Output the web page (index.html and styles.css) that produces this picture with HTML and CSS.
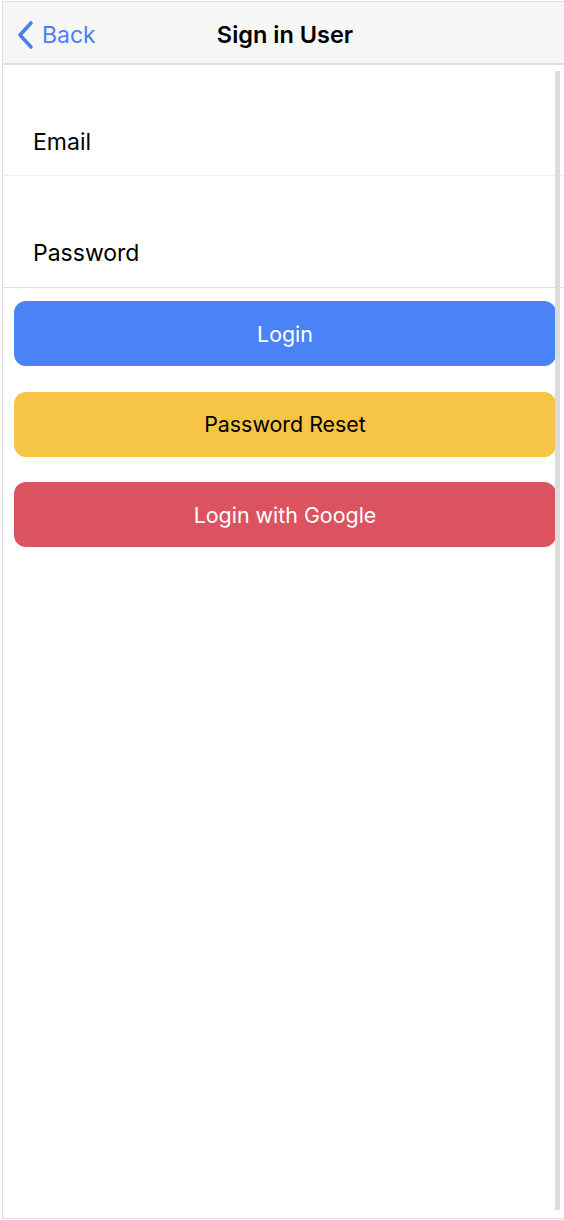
FILE: index.html
```html
<!DOCTYPE html>
<html>
<head>
<meta charset="utf-8">
<link rel="stylesheet" href="styles.css">
</head>
<body>
<div class="frame">
  <header class="navbar">
    <div class="back">
      <svg class="chev" width="18" height="30" viewBox="0 0 18 30"><path d="M15 3 L4 15 L15 27" fill="none" stroke="#4a80f5" stroke-width="3.6" stroke-linecap="round" stroke-linejoin="round"/></svg>
      <span>Back</span>
    </div>
    <div class="title">Sign in User</div>
  </header>
  <main class="content">
    <div class="field field-email"><span>Email</span></div>
    <div class="field field-pass"><span>Password</span></div>
    <div class="buttons">
      <button class="btn btn-blue">Login</button>
      <button class="btn btn-yellow">Password Reset</button>
      <button class="btn btn-red">Login with Google</button>
    </div>
    <div class="scrollbar"></div>
  </main>
</div>
</body>
</html>
```
FILE: styles.css
```css
html, body { margin: 0; padding: 0; background: #fff; }
body { font-family: Inter, "Noto Sans", sans-serif; }
.frame {
  margin: 1px 0 0 2px;
  height: 1218px;
  border: 1px solid #dedede;
  border-right: none;
  display: flex;
  flex-direction: column;
  box-sizing: border-box;
}
.navbar {
  position: relative;
  height: 63px;
  background: #f6f6f6;
  border-bottom: 2px solid #e0e0e0;
  display: flex;
  align-items: center;
  justify-content: center;
  flex-shrink: 0;
  box-sizing: border-box;
}
.back {
  position: absolute;
  left: 13px;
  top: 18px;
  display: flex;
  align-items: center;
  gap: 8px;
  color: #4a80f5;
  font-size: 23px;
}
.chev { display: block; }
.title {
  font-size: 23.5px;
  font-weight: 600;
  color: #000;
  margin-top: 4px;
  margin-left: 3px;
}
.content {
  position: relative;
  flex: 1;
}
.field {
  box-sizing: border-box;
  padding: 63px 0 0 30px;
  font-size: 23px;
  color: #000;
  line-height: 28px;
}
.field-email { border-bottom: 1px solid #eeeeee; height: 111px; }
.field-pass { border-bottom: 1px solid #e0e0e0; height: 112px; }
.buttons {
  display: flex;
  flex-direction: column;
  gap: 25.5px;
  padding: 13px 8px 0 11px;
}
.btn {
  height: 65px;
  border: none;
  border-radius: 12px;
  font-family: Inter, "Noto Sans", sans-serif;
  font-size: 21.4px;
  color: #fff;
  width: 100%;
}
.btn-blue { background: #4a82f7; }
.btn-yellow { background: #f6c545; color: #000; }
.btn-red { background: #dc5360; }
.scrollbar {
  position: absolute;
  right: 4px;
  top: 6px;
  width: 5px;
  height: 1139px;
  background: #dcdcdc;
}
```
